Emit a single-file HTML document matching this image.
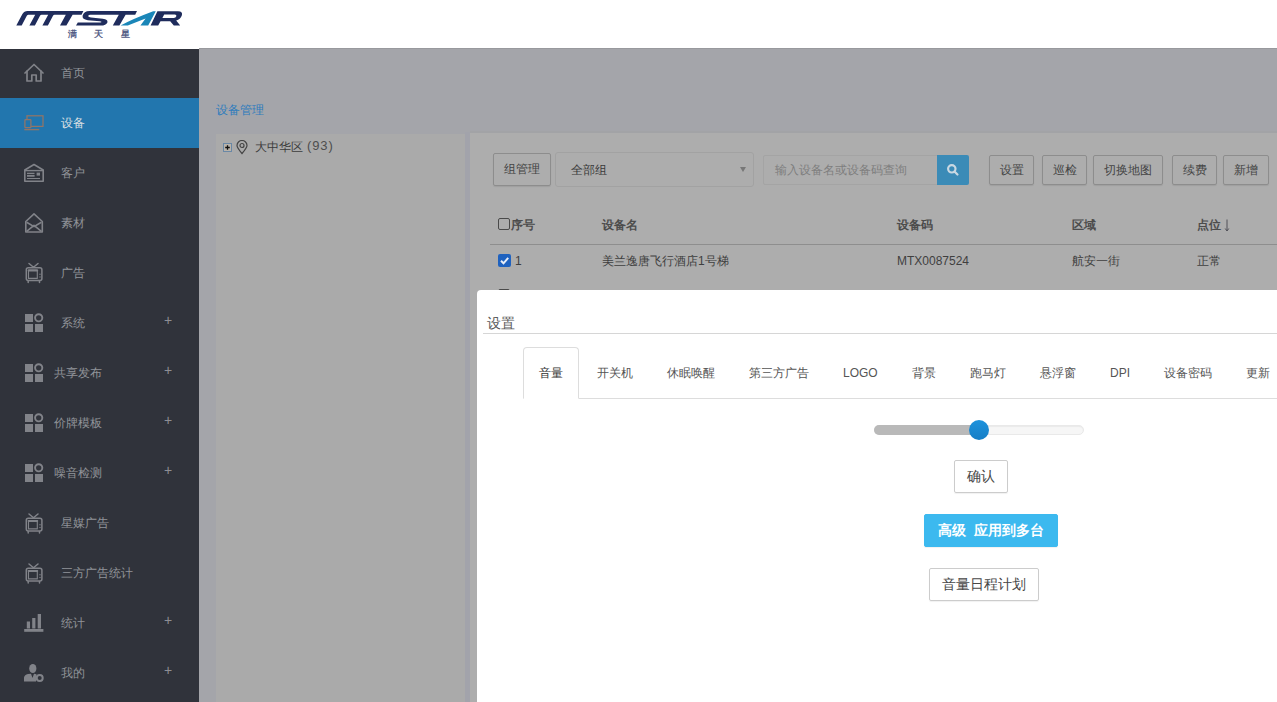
<!DOCTYPE html>
<html><head><meta charset="utf-8">
<style>
*{margin:0;padding:0;box-sizing:border-box}
html,body{width:1277px;height:702px;overflow:hidden;background:#fff;font-family:"Liberation Sans",sans-serif;font-size:12px}
.a{position:absolute;white-space:nowrap}
#hdr{position:absolute;left:0;top:0;width:1277px;height:48px;background:#fff}
#side{position:absolute;left:0;top:48px;width:199px;height:654px;background:#30333b}
.it{position:absolute;left:0;width:199px;height:50px;color:#919399}
.it .t{position:absolute;left:61px;top:17px;line-height:16px;font-size:12px}
.it .t4{left:54px}
.it .pl{position:absolute;left:164px;top:14px;font-size:14px;line-height:16px;color:#8d8f95}
.it svg{position:absolute;left:0;top:0}
.act{background:#2276ae}
.act .t{color:#dde0e4}
#main{position:absolute;left:199px;top:48px;width:1078px;height:654px;background:#a4a5aa;overflow:hidden}
.btn{position:absolute;border:1px solid #8d8d8d;color:#444;text-align:center;font-size:12px;border-radius:2px;line-height:28px;height:30px;box-shadow:0 1px 1px rgba(0,0,0,0.08)}
.th{position:absolute;top:170px;font-weight:bold;color:#4c4c4c;line-height:16px}
.td{position:absolute;top:206px;color:#3f3f3f;line-height:16px}
#modal{position:absolute;left:278px;top:242px;width:900px;height:500px;background:#fff;border-radius:4px 0 0 0}
.tab{position:absolute;top:67px;color:#555;line-height:16px}
.mb{position:absolute;border:1px solid #ccc;border-radius:2px;color:#484848;font-size:14px;text-align:center;line-height:31px;height:33px;box-shadow:0 1px 1px rgba(0,0,0,0.06)}
</style></head><body>
<div id="hdr">
<svg class="a" style="left:0;top:0" width="200" height="48" viewBox="0 0 200 48">
 <g fill="#1f2c5c">
  <path d="M16.3 25.5 L22.4 14 Q24.2 11 27.5 11 L83.4 11 L81.6 14.8 L72.6 14.8 L66.4 25.5 L60 25.5 L65.8 14.8 L54.6 14.8 Q53.6 14.9 53 15.8 L47.9 25.5 L42.4 25.5 L48.2 14.8 L41.6 14.8 Q40.6 14.9 40 15.8 L34.9 25.5 L29.4 25.5 L35.2 14.8 L28.4 14.8 Q27.4 14.9 26.8 15.8 L21.7 25.5 Z"/>
  <path d="M89.5 11 L137 11 L135.2 14.8 L125.6 14.8 L119.4 25.5 L112.8 25.5 L118.8 14.8 L90 14.8 Q88 14.9 88.2 16.2 Q88.6 17.2 91 17.5 L102.8 18.8 Q108.2 19.6 107.4 22.4 Q106.2 25.5 100.5 25.5 L76 25.5 L77.8 22.4 L100.2 22.4 Q101.8 22.2 101.4 21.7 Q101 21.4 99.8 21.3 L87.8 20.2 Q82 19.4 82.6 15.8 Q83.8 11.1 89.5 11 Z"/>
  <path d="M150.6 25.5 L157.4 11.2 L178 11.2 Q183.3 11.4 181.8 15.4 Q180.4 19.2 176.2 20.6 L180.2 25.5 L173.8 25.5 L170.2 21.2 L160.5 21.2 L158.2 25.5 Z M162.4 18 L173.8 18 Q175.8 17.8 176.3 16.2 Q176.8 14.6 174.8 14.5 L164.2 14.5 Z"/>
 </g>
 <path fill="#1a86b8" d="M120.6 25.5 Q131 19.5 153.2 11.2 L155.8 11.2 L148.2 25.5 L140.4 25.5 L145.6 18.6 L127.8 25.5 Z"/>
 <text x="67.5" y="37.4" font-size="9" fill="#4a5480" stroke="#4a5480" stroke-width="0.3" letter-spacing="17.6">满天星</text>
</svg>
</div>
<div id="side">
 <div class="it" style="top:0"><svg width="60" height="50" fill="none" stroke="#818389" stroke-width="1.7" stroke-linejoin="round" stroke-linecap="round"><path d="M25 25 L34 16.5 L43 25"/><path d="M27 23 V33 H31.8 V27 H36.2 V33 H41 V23"/></svg><span class="t">首页</span></div>
 <div class="it act" style="top:50px"><svg width="60" height="50" fill="none" stroke="#927567" stroke-width="1.25"><rect x="27" y="17.8" width="16" height="10.6"/><rect x="24.9" y="21.6" width="6" height="8" rx="0.6" fill="#2276ae"/><path d="M24.3 31.6 H39.2" stroke-width="1.4"/></svg><span class="t">设备</span></div>
 <div class="it" style="top:100px"><svg width="60" height="50" fill="none" stroke="#818389" stroke-width="1.6" stroke-linejoin="round"><path d="M24.8 22 L34 16.5 L43.2 22 V33.3 H24.8 Z"/><path d="M25 22.6 H43" stroke-width="1.4"/><path d="M27 25.3 H34.5 M27 28 H34.5 M27 30.5 H40" stroke-width="1.2"/><rect x="36.6" y="24.6" width="3.4" height="3" fill="#818389" stroke="none"/><path d="M27 27.7 H34.5" stroke-width="1.6"/></svg><span class="t">客户</span></div>
 <div class="it" style="top:150px"><svg width="60" height="50" fill="none" stroke="#818389" stroke-width="1.6" stroke-linejoin="round"><path d="M25.8 23.5 L34 15.8 L42.3 23.5 V34 H25.8 Z"/><path d="M26.6 24.2 L34 28.6 L41.4 24.2"/><path d="M26.6 33.4 L34 27.4 L41.4 33.4"/></svg><span class="t">素材</span></div>
 <div class="it" style="top:200px"><svg width="60" height="50" fill="none" stroke="#818389" stroke-width="1.5" stroke-linejoin="round" stroke-linecap="round"><path d="M29 15.5 L33.5 19.3 L38 15.5"/><rect x="26.3" y="19.8" width="15.6" height="12.6" rx="2"/><rect x="28.5" y="22" width="8.8" height="8.4" stroke-width="1.1"/><path d="M28.5 22.5 H37.3" stroke-width="1.8"/><path d="M28.2 33 V34.5 M39.5 33 V34.5"/><circle cx="40" cy="26.2" r="0.7" fill="#818389" stroke="none"/><circle cx="40" cy="29" r="0.7" fill="#818389" stroke="none"/></svg><span class="t">广告</span></div>
 <div class="it" style="top:250px"><svg class="g" width="60" height="50"><use href="#grid"/></svg><span class="t">系统</span><span class="pl">+</span></div>
 <div class="it" style="top:300px"><svg width="60" height="50"><use href="#grid"/></svg><span class="t t4">共享发布</span><span class="pl">+</span></div>
 <div class="it" style="top:350px"><svg width="60" height="50"><use href="#grid"/></svg><span class="t t4">价牌模板</span><span class="pl">+</span></div>
 <div class="it" style="top:400px"><svg width="60" height="50"><use href="#grid"/></svg><span class="t t4">噪音检测</span><span class="pl">+</span></div>
 <div class="it" style="top:450px"><svg width="60" height="50"><use href="#tv" y="0.5"/></svg><span class="t">星媒广告</span></div>
 <div class="it" style="top:500px"><svg width="60" height="50"><use href="#tv" y="0.5"/></svg><span class="t">三方广告统计</span></div>
 <div class="it" style="top:550px"><svg width="60" height="50" fill="#818389"><rect x="26.8" y="23.5" width="3.2" height="7"/><rect x="32.2" y="20" width="3.2" height="10.5"/><rect x="37.7" y="16" width="3.3" height="14.5"/><rect x="24.2" y="31" width="19.2" height="2.8"/></svg><span class="t">统计</span><span class="pl">+</span></div>
 <div class="it" style="top:600px"><svg width="60" height="50" fill="#818389"><ellipse cx="32.8" cy="20.5" rx="3.6" ry="4.6"/><path d="M24 33.5 V29.5 Q24.5 26.8 28 26 L31 25.8 L32.5 30 L34 25.8 L36.5 26.2 L36 33.5 Z"/><circle cx="39.7" cy="30" r="3" fill="none" stroke="#818389" stroke-width="2"/></svg><span class="t">我的</span><span class="pl">+</span></div>
</div>
<svg width="0" height="0" style="position:absolute">
 <defs>
  <g id="grid" fill="#818389"><rect x="25" y="16" width="8" height="8"/><rect x="25" y="26" width="8" height="8"/><rect x="35" y="26" width="8" height="8"/><circle cx="38.7" cy="19.8" r="3.6" fill="none" stroke="#818389" stroke-width="1.9"/></g>
  <g id="tv" fill="none" stroke="#818389" stroke-width="1.5" stroke-linejoin="round" stroke-linecap="round"><path d="M29 15.5 L33.5 19.3 L38 15.5"/><rect x="26.3" y="19.8" width="15.6" height="12.6" rx="2"/><rect x="28.5" y="22" width="8.8" height="8.4" stroke-width="1.1"/><path d="M28.5 22.5 H37.3" stroke-width="1.8"/><path d="M28.2 33 V34.5 M39.5 33 V34.5"/><circle cx="40" cy="26.2" r="0.7" fill="#818389" stroke="none"/><circle cx="40" cy="29" r="0.7" fill="#818389" stroke="none"/></g>
 </defs>
</svg>
<div style="position:absolute;left:0;top:48px;width:199px;height:1px;background:#fff"></div>
<div id="main">
 <div style="position:absolute;left:0;top:0;width:1078px;height:1px;background:#98999d"></div>
 <div class="a" style="left:17px;top:54px;line-height:16px;color:#2f7cbd">设备管理</div>
 <div style="position:absolute;left:17px;top:86px;width:249px;height:600px;background:#aaaaaa"></div>
 <div style="position:absolute;left:271px;top:83px;width:820px;height:2px;background:#a2a3a6"></div>
 <div style="position:absolute;left:266px;top:84px;width:5px;height:620px;background:#a2a3ab"></div>
 <svg class="a" style="left:24px;top:95px" width="9" height="9"><rect x="0.5" y="0.5" width="8" height="8" fill="#b9b3aa" stroke="#6a88a6"/><path d="M2.2 4.5 H6.8 M4.5 2.2 V6.8" stroke="#111" stroke-width="1.3"/></svg>
 <svg class="a" style="left:37px;top:92px" width="12" height="15" fill="none" stroke="#444" stroke-width="1.2"><path d="M6 13.5 C3 10 1 7.5 1 5.5 A5 5 0 0 1 11 5.5 C11 7.5 9 10 6 13.5 Z"/><circle cx="6" cy="5.5" r="2"/></svg>
 <div class="a" style="left:56px;top:91px;color:#3c3c3c;font-size:12px;line-height:16px">大中华区</div>
 <div class="a" style="left:108px;top:90px;color:#4e4e4e;font-size:13px;line-height:16px;letter-spacing:0.9px">(93)</div>
 <div style="position:absolute;left:271px;top:85px;width:820px;height:600px;background:#adadad">
  <div class="btn" style="left:23px;top:20px;width:58px;height:33px;line-height:31px">组管理</div>
  <div style="position:absolute;left:85px;top:19px;width:199px;height:35px;border:1px solid #a2a2a2;border-radius:3px"></div>
  <div class="a" style="left:101px;top:29px;color:#3a3a3a;line-height:16px">全部组</div>
  <div class="a" style="left:270px;top:34px;width:0;height:0;border-left:3px solid transparent;border-right:3px solid transparent;border-top:5px solid #777"></div>
  <div style="position:absolute;left:293px;top:22px;width:175px;height:30px;border:1px solid #a4a4a4;border-radius:2px 0 0 2px"></div>
  <div class="a" style="left:305px;top:29px;color:#7e7e7e;line-height:16px">输入设备名或设备码查询</div>
  <div style="position:absolute;left:467px;top:22px;width:32px;height:30px;background:#3b8bb7;border-radius:0 2px 2px 0"></div>
  <svg class="a" style="left:476px;top:30px" width="14" height="14" fill="none" stroke="#c9d8e2" stroke-width="2.2"><circle cx="5.8" cy="5.8" r="3.7"/><path d="M8.5 8.5 L11.5 11.5" stroke-linecap="round"/></svg>
  <div class="btn" style="left:519px;top:22px;width:45px">设置</div>
  <div class="btn" style="left:572px;top:22px;width:45px">巡检</div>
  <div class="btn" style="left:623px;top:22px;width:70px">切换地图</div>
  <div class="btn" style="left:702px;top:22px;width:45px">续费</div>
  <div class="btn" style="left:753px;top:22px;width:46px">新增</div>
  <div style="position:absolute;left:28px;top:85px;width:12px;height:12px;border:1px solid #4a4a4a;border-radius:2px"></div>
  <div class="th" style="left:41px;top:84px">序号</div>
  <div class="th" style="left:132px;top:84px">设备名</div>
  <div class="th" style="left:427px;top:84px">设备码</div>
  <div class="th" style="left:602px;top:84px">区域</div>
  <div class="th" style="left:727px;top:84px">点位</div>
  <svg class="a" style="left:753px;top:86px" width="8" height="13" fill="none" stroke="#505058" stroke-width="1"><path d="M4 0.5 V12 M2.2 9.5 L4 12 L5.8 9.5"/></svg>
  <div style="position:absolute;left:20px;top:111px;width:800px;height:1px;background:#8e8e8e"></div>
  <div style="position:absolute;left:28px;top:121px;width:13px;height:13px;background:#1f62bf;border-radius:2px"></div>
  <svg class="a" style="left:28px;top:121px" width="13" height="13" fill="none" stroke="#e8eef8" stroke-width="2"><path d="M3 6.8 L5.5 9.3 L10.2 3.8"/></svg>
  <div class="td" style="left:45px;top:120px">1</div>
  <div class="td" style="left:132px;top:120px">美兰逸唐飞行酒店1号梯</div>
  <div class="td" style="left:427px;top:120px">MTX0087524</div>
  <div class="td" style="left:602px;top:120px">航安一街</div>
  <div class="td" style="left:727px;top:120px">正常</div>
  <div style="position:absolute;left:28px;top:156px;width:12px;height:12px;border:1px solid #4a4a4a;border-radius:2px"></div>
 </div>
 <div id="modal">
  <div class="a" style="left:10px;top:24px;font-size:14px;line-height:18px;color:#5a5a5a">设置</div>
  <div style="position:absolute;left:6px;top:43px;width:900px;height:1px;background:#d6d6d6"></div>
  <div style="position:absolute;left:46px;top:108px;width:900px;height:1px;background:#ddd"></div>
  <div style="position:absolute;left:46px;top:57px;width:56px;height:52px;border:1px solid #ddd;border-bottom-color:#fff;border-radius:4px 4px 0 0;background:#fff"></div>
  <div class="tab" style="left:62px;top:75px;color:#333">音量</div>
  <div class="tab" style="left:120px;top:75px">开关机</div>
  <div class="tab" style="left:190px;top:75px">休眠唤醒</div>
  <div class="tab" style="left:272px;top:75px">第三方广告</div>
  <div class="tab" style="left:366px;top:75px">LOGO</div>
  <div class="tab" style="left:435px;top:75px">背景</div>
  <div class="tab" style="left:493px;top:75px">跑马灯</div>
  <div class="tab" style="left:563px;top:75px">悬浮窗</div>
  <div class="tab" style="left:633px;top:75px">DPI</div>
  <div class="tab" style="left:687px;top:75px">设备密码</div>
  <div class="tab" style="left:769px;top:75px">更新</div>
  <div style="position:absolute;left:397px;top:135px;width:210px;height:10px;border-radius:5px;background:#f6f6f6;border:1px solid #e9e9e9;box-shadow:inset 0 1px 1px rgba(0,0,0,0.05)"></div>
  <div style="position:absolute;left:397px;top:135px;width:106px;height:10px;border-radius:5px 0 0 5px;background:#b9b9b9"></div>
  <div style="position:absolute;left:492px;top:130px;width:20px;height:20px;border-radius:50%;background:linear-gradient(#1d92dc,#157ec6)"></div>
  <div class="mb" style="left:477px;top:170px;width:54px">确认</div>
  <div class="mb" style="left:447px;top:224px;width:134px;background:#3cb9ef;border-color:#3cb9ef;color:#fff;font-weight:bold">高级&nbsp; 应用到多台</div>
  <div class="mb" style="left:452px;top:278px;width:110px">音量日程计划</div>
 </div>
</div>
</body></html>
